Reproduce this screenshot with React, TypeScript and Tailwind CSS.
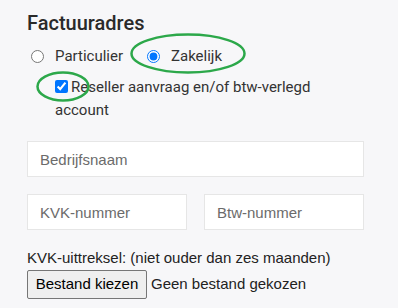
import React from "react";

export default function App() {
  return (
    <div className="relative w-[398px] h-[308px] overflow-hidden bg-[#f7f7f9] text-[#333333]">
      <div className="flex flex-col pl-[27px] pr-[34px] pt-[11px]">
        <h2 className="text-[20px] leading-[24px] font-medium font-['Roboto',sans-serif] text-[#2a2a2a]">
          Factuuradres
        </h2>
        <div className="mt-[9px] flex items-center h-[24px] font-['Roboto',sans-serif] text-[15px]">
          <label className="flex items-center">
            <input type="radio" name="t" className="ml-[4px] w-[13px] h-[13px] accent-[#0075ff]" />
            <span className="ml-[11px]">Particulier</span>
          </label>
          <label className="flex items-center ml-[24px]">
            <input type="radio" name="t" defaultChecked className="w-[13px] h-[13px] accent-[#0075ff]" />
            <span className="ml-[11px]">Zakelijk</span>
          </label>
        </div>
        <div className="mt-[8px] ml-[28px] w-[290px] font-['Roboto',sans-serif] text-[15px] leading-[23px]">
          <input type="checkbox" defaultChecked className="w-[13px] h-[13px] align-[-1px] accent-[#0075ff]" />
          <span className="ml-[3px]">Reseller aanvraag en/of btw-verlegd account</span>
        </div>
        <div className="mt-[19px] flex flex-col gap-[17px] font-['Liberation_Sans',Arial,sans-serif] text-[15px]">
          <input
            placeholder="Bedrijfsnaam"
            className="h-[36px] w-full bg-white border border-[#e6e6e6] px-[12px] placeholder:text-[#6b6b6b] outline-none"
          />
          <div className="flex gap-[17px]">
            <input
              placeholder="KVK-nummer"
              className="h-[36px] w-[160px] bg-white border border-[#e6e6e6] px-[12px] placeholder:text-[#6b6b6b] outline-none"
            />
            <input
              placeholder="Btw-nummer"
              className="h-[36px] w-[160px] bg-white border border-[#e6e6e6] px-[12px] placeholder:text-[#6b6b6b] outline-none"
            />
          </div>
        </div>
        <div className="mt-[18px] font-['Liberation_Sans',Arial,sans-serif] text-[15px] leading-[20px] text-[#222]">
          KVK-uittreksel: (niet ouder dan zes maanden)
        </div>
        <div className="mt-[2px] flex items-center font-['Liberation_Sans',Arial,sans-serif] text-[15px]">
          <button className="h-[29px] w-[120px] bg-[#efefef] border border-[#767676] rounded-[2px] text-black">
            Bestand kiezen
          </button>
          <span className="ml-[4px] text-[#222]">Geen bestand gekozen</span>
        </div>
      </div>
      <svg className="absolute left-0 top-0 pointer-events-none" width="398" height="308">
        <ellipse cx="188" cy="53.5" rx="56.5" ry="19" fill="none" stroke="#2ca84a" strokeWidth="2.5" />
        <ellipse cx="63" cy="86.5" rx="25.5" ry="14" fill="none" stroke="#2ca84a" strokeWidth="2.5" />
      </svg>
    </div>
  );
}
